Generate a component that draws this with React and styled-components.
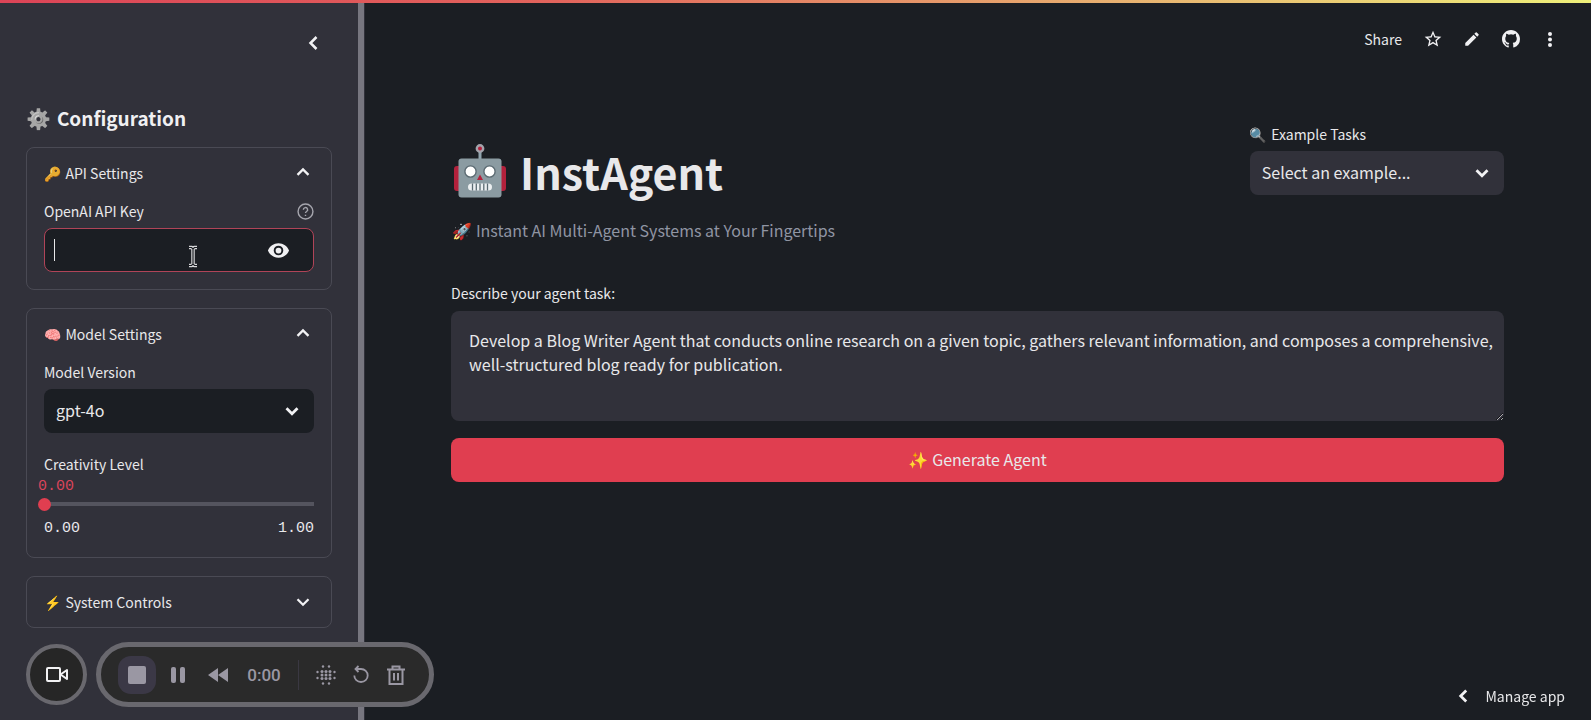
import React, { useState } from "react";
import styled, { createGlobalStyle } from "styled-components";

const GlobalStyle = createGlobalStyle`
  * { box-sizing: border-box; }
  body { margin: 0; background: #1b1e23; }
  body, button, input, select, textarea {
    font-family: "Noto Sans CJK SC", "Noto Sans", "Noto Color Emoji", sans-serif;
    color: #e8e8ea;
  }
  button { border: 0; padding: 0; background: none; cursor: pointer; }
`;

const Page = styled.div`
  display: flex;
  flex-direction: column;
  min-height: 100vh;
`;

const AccentBar = styled.div`
  height: 3px;
  flex: none;
  background: linear-gradient(90deg, #dc4457, #e2645c 35%, #e8b070 70%, #eef07a);
`;

const Shell = styled.div`
  display: flex;
  flex: 1;
`;

const Sidebar = styled.aside`
  display: flex;
  flex: none;
  width: 365px;
  background: #31313a;
`;

const SidebarBody = styled.div`
  flex: 1;
  padding: 24px 26px 90px;
`;

const ScrollThumb = styled.div`
  width: 6px;
  margin: 0 1px 7px 0;
  border-radius: 0 0 3px 3px;
  background: #77767f;
`;

const IconButton = styled.button`
  display: flex;
  flex: none;
  align-items: center;
  justify-content: center;
  width: ${(p) => p.$size || 32}px;
  height: ${(p) => p.$size || 32}px;
  color: ${(p) => p.$color || "#f0f0f2"};
`;

const SidebarTop = styled.div`
  display: flex;
  justify-content: flex-end;
  padding-right: 3px;
`;

const Emoji = styled.span`
  filter: ${(p) => p.$filter || "none"};
`;

const SidebarTitle = styled.h2`
  display: flex;
  align-items: center;
  gap: 6px;
  margin: 43px 0 13px;
  font-size: 19px;
  line-height: 32px;
  font-weight: 600;
  color: #f0f0f2;
  & > span { font-size: 20px; }
`;

const Card = styled.section`
  margin-bottom: 18px;
  padding: 0 17px ${(p) => p.$bottom || 0}px;
  border: 1px solid #4a4a54;
  border-radius: 8px;
`;

const CardHeader = styled.button`
  display: flex;
  align-items: center;
  justify-content: space-between;
  width: 100%;
  height: 50px;
  font-size: 14px;
  line-height: 24px;
`;

const WithEmoji = styled.span`
  display: inline-flex;
  align-items: center;
  gap: 4px;
`;

const LabelRow = styled.div`
  display: flex;
  align-items: center;
  justify-content: space-between;
  height: 26px;
  margin-bottom: 4px;
`;

const Label = styled.label`
  display: flex;
  align-items: center;
  gap: 4px;
  font-size: 14px;
  line-height: 24px;
`;

const KeyBox = styled.div`
  display: flex;
  align-items: center;
  position: relative;
  height: 44px;
  padding: 0 20px 0 9px;
  border: 1px solid #b04458;
  border-radius: 8px;
  background: #1b1e23;
`;

const Caret = styled.span`
  width: 1px;
  height: 22px;
  background: #e8e8ea;
`;

const KeyInput = styled.input`
  flex: 1;
  min-width: 0;
  border: 0;
  outline: 0;
  background: transparent;
  font-size: 16px;
`;

const Pointer = styled.svg`
  position: absolute;
  left: 142px;
  top: 16px;
`;

const SelectBox = styled.div`
  position: relative;
  & > svg {
    position: absolute;
    right: 11px;
    top: 11px;
    pointer-events: none;
  }
`;

const Select = styled.select`
  appearance: none;
  display: block;
  width: 100%;
  height: 44px;
  padding: 0 40px 2px 12px;
  border: 0;
  border-radius: 8px;
  background: ${(p) => p.$bg};
  font-size: 16px;
`;

const Slider = styled.div`
  display: flex;
  flex-direction: column;
  margin: 1px 0 0 -6px;
`;

const SliderValue = styled.output`
  font: 15px/20px "Liberation Mono", monospace;
  color: #d9455a;
`;

const Range = styled.input`
  appearance: none;
  width: 100%;
  height: 14px;
  margin: 0;
  background: linear-gradient(#54545e, #54545e) 6px 5px / 100% 4px no-repeat;
  border-radius: 2px;
  &::-webkit-slider-thumb {
    appearance: none;
    width: 13px;
    height: 13px;
    border-radius: 50%;
    background: #e03e50;
  }
`;

const Ticks = styled.div`
  display: flex;
  justify-content: space-between;
  margin-top: 8px;
  font: 15px/20px "Liberation Mono", monospace;
`;

const Spacer = styled.div`
  height: 19px;
`;

const Main = styled.main`
  flex: 1;
  min-width: 0;
`;

const TopBar = styled.header`
  display: flex;
  justify-content: flex-end;
  align-items: center;
  height: 72px;
  padding-right: 25px;
`;

const ShareButton = styled.button`
  margin-right: 11px;
  font-size: 14px;
  line-height: 24px;
`;

const Tool = styled(IconButton)`
  width: 39px;
  &:last-child { width: 32px; margin-left: 4px; }
`;

const Content = styled.div`
  padding: 46px 87px 40px 86px;
`;

const Columns = styled.div`
  display: grid;
  grid-template-columns: 3fr 1fr;
  gap: 36px;
`;

const Title = styled.h1`
  display: flex;
  align-items: center;
  gap: 12px;
  margin: 16px 0 0;
  padding-left: 1px;
  font-size: 43px;
  line-height: 68px;
  font-weight: 700;
`;

const Subtitle = styled.p`
  display: flex;
  align-items: center;
  gap: 4px;
  margin: 12px 0 37px;
  padding-left: 1px;
  font-size: 16px;
  line-height: 26px;
  color: #9095a3;
`;

const TaskText = styled.textarea`
  display: block;
  width: 100%;
  height: 110px;
  margin: 5px 0 17px;
  padding: 17px 10px 17px 18px;
  border: 0;
  outline: 0;
  border-radius: 8px;
  background: #31313a;
  font-size: 16px;
  line-height: 24px;
`;

const Generate = styled.button`
  display: flex;
  align-items: center;
  justify-content: center;
  gap: 4px;
  width: 100%;
  height: 44px;
  padding-bottom: 2px;
  border-radius: 8px;
  background: #e03e50;
  font-size: 16px;
`;

const Recorder = styled.div`
  position: fixed;
  left: 26px;
  bottom: 13px;
  display: flex;
  align-items: center;
  gap: 9px;
`;

const CameraButton = styled.button`
  display: flex;
  align-items: center;
  justify-content: center;
  width: 61px;
  height: 61px;
  border: 4px solid #69686e;
  border-radius: 50%;
  background: #262626;
`;

const Pill = styled.div`
  display: flex;
  align-items: center;
  width: 338px;
  height: 65px;
  padding-left: 17px;
  border: 5px solid #69686e;
  border-radius: 33px;
  background: #2a2a2a;
  color: #9a97a3;
`;

const StopButton = styled(IconButton)`
  margin-right: 1px;
  border-radius: 13px;
  background: #3b3846;
`;

const Time = styled.span`
  width: 48px;
  margin: 0 10px 0 3px;
  text-align: center;
  font: 500 17px/24px Roboto, sans-serif;
`;

const Divider = styled.span`
  width: 1px;
  height: 30px;
  margin-right: 9px;
  background: #3a3842;
`;

const ManageApp = styled.button`
  position: fixed;
  right: 26px;
  bottom: 12px;
  display: flex;
  align-items: center;
  gap: 12px;
  font-size: 14px;
  line-height: 24px;
`;

const chevrons = {
  left: "M15.500 6l-6 6 6 6",
  up: "M6 14l6-6 6 6",
  down: "M6 9l6 6 6-6",
};

const Chevron = ({ dir, size = 22, weight = 3 }) => (
  <svg width={size} height={size} viewBox="0 0 24 24" fill="none" stroke="#f2f2f4" strokeWidth={weight} aria-hidden="true">
    <path d={chevrons[dir]} />
  </svg>
);

const RobotIcon = () => (
  <svg width="56" height="56" viewBox="0 0 56 56" role="img" aria-label="Robot">
    <rect x="2" y="23" width="8" height="25" rx="3" fill="#b3213c" />
    <rect x="46" y="23" width="8" height="25" rx="3" fill="#b3213c" />
    <path d="M28 7v10" stroke="#90a4ae" strokeWidth="3" />
    <circle cx="28" cy="5.500" r="3.200" fill="#b3213c" stroke="#a3a3ab" strokeWidth="2.400" />
    <rect x="6.500" y="15.500" width="43" height="39" rx="3" fill="#8b9ba2" />
    <circle cx="18.500" cy="28.500" r="5.600" fill="#fff" stroke="#5b6a72" strokeWidth="1.400" />
    <circle cx="37.500" cy="28.500" r="5.600" fill="#fff" stroke="#5b6a72" strokeWidth="1.400" />
    <path d="M28 31.500l3 5.500h-6z" fill="#b3213c" />
    <rect x="16" y="40.500" width="24" height="7" rx="3.500" fill="#eceff1" />
    <path d="M20.500 40.500v7M24.300 40.500v7M28 40.500v7M31.800 40.500v7M35.500 40.500v7" stroke="#5b6a72" strokeWidth="1.300" />
  </svg>
);

const StarIcon = () => (
  <svg width="20" height="20" viewBox="0 0 24 24" fill="currentColor">
    <path d="M22 9.24l-7.19-.62L12 2 9.19 8.63 2 9.24l5.46 4.73L5.82 21 12 17.27 18.18 21l-1.63-7.03L22 9.24zM12 15.4l-3.76 2.27 1-4.28-3.32-2.88 4.38-.38L12 6.1l1.71 4.04 4.38.38-3.32 2.88 1 4.28L12 15.4z" />
  </svg>
);

const PencilIcon = () => (
  <svg width="18" height="18" viewBox="0 0 24 24" fill="currentColor">
    <path d="M3 17.25V21h3.75L17.81 9.94l-3.75-3.75L3 17.25zM20.71 7.04a1 1 0 0 0 0-1.41l-2.34-2.34a1 1 0 0 0-1.41 0l-1.83 1.83 3.75 3.75 1.83-1.83z" />
  </svg>
);

const GithubIcon = () => (
  <svg width="18" height="18" viewBox="0 0 16 16" fill="currentColor">
    <path d="M8 0C3.58 0 0 3.58 0 8c0 3.54 2.29 6.53 5.47 7.59.4.07.55-.17.55-.38 0-.19-.01-.82-.01-1.49-2.01.37-2.53-.49-2.69-.94-.09-.23-.48-.94-.82-1.13-.28-.15-.68-.52-.01-.53.63-.01 1.08.58 1.23.82.72 1.21 1.87.87 2.33.66.07-.52.28-.87.51-1.07-1.78-.2-3.64-.89-3.64-3.95 0-.87.31-1.59.82-2.15-.08-.2-.36-1.02.08-2.12 0 0 .67-.21 2.2.82a7.6 7.6 0 0 1 4 0c1.53-1.04 2.2-.82 2.2-.82.44 1.1.16 1.92.08 2.12.51.56.82 1.27.82 2.15 0 3.07-1.87 3.75-3.65 3.95.29.25.54.73.54 1.48 0 1.07-.01 1.93-.01 2.2 0 .21.15.46.55.38A8 8 0 0 0 16 8c0-4.42-3.58-8-8-8z" />
  </svg>
);

const DotsIcon = () => (
  <svg width="20" height="20" viewBox="0 0 20 20" fill="currentColor">
    <circle cx="10" cy="5" r="2" /><circle cx="10" cy="10.500" r="2" /><circle cx="10" cy="16" r="2" />
  </svg>
);

const EyeIcon = () => (
  <svg width="23" height="23" viewBox="0 0 24 24" fill="currentColor">
    <path d="M12 4.5C7 4.5 2.73 7.61 1 12c1.73 4.39 6 7.5 11 7.5s9.27-3.11 11-7.5c-1.73-4.39-6-7.5-11-7.5zM12 17a5 5 0 1 1 0-10 5 5 0 0 1 0 10zm0-8a3 3 0 1 0 0 6 3 3 0 0 0 0-6z" />
  </svg>
);

const HelpIcon = () => (
  <svg width="17" height="17" viewBox="0 0 24 24" fill="none" stroke="#a5a5ad" strokeWidth="2">
    <circle cx="12" cy="12" r="10.500" />
    <path d="M9 9.500a3 3 0 1 1 4.500 2.500c-1 .6-1.500 1-1.500 2.200M12 16.500v2" />
  </svg>
);

export default function App() {
  const [level, setLevel] = useState(0);
  return (
    <Page>
      <GlobalStyle />
      <AccentBar />
      <Shell>
        <Sidebar>
          <SidebarBody>
            <SidebarTop>
              <IconButton aria-label="Collapse sidebar"><Chevron dir="left" size={24} weight={2.5} /></IconButton>
            </SidebarTop>
            <SidebarTitle><Emoji $filter="grayscale(1)">⚙️</Emoji> Configuration</SidebarTitle>

            <Card $bottom={17}>
              <CardHeader aria-expanded="true">
                <WithEmoji><Emoji $filter="hue-rotate(-12deg) brightness(0.9)">🔑</Emoji> API Settings</WithEmoji>
                <Chevron dir="up" weight={2.5} />
              </CardHeader>
              <LabelRow>
                <Label htmlFor="key">OpenAI API Key</Label>
                <HelpIcon />
              </LabelRow>
              <KeyBox>
                <Caret />
                <KeyInput id="key" type="password" />
                <IconButton $size={30} aria-label="Show key"><EyeIcon /></IconButton>
                <Pointer width="12" height="23" viewBox="0 0 12 23" fill="none">
                  <path d="M2 2.500h2.500L6 4l1.500-1.500H10M6 4v15M2 20.500h2.500L6 19l1.500 1.500H10" stroke="#d8d8da" strokeWidth="3.500" />
                  <path d="M2 2.500h2.500L6 4l1.500-1.500H10M6 4v15M2 20.500h2.500L6 19l1.500 1.500H10" stroke="#1b1e23" strokeWidth="1.200" />
                </Pointer>
              </KeyBox>
            </Card>

            <Card $bottom={18}>
              <CardHeader aria-expanded="true">
                <WithEmoji><Emoji>🧠</Emoji> Model Settings</WithEmoji>
                <Chevron dir="up" weight={2.5} />
              </CardHeader>
              <LabelRow><Label htmlFor="model">Model Version</Label></LabelRow>
              <SelectBox>
                <Select id="model" $bg="#1b1e23"><option>gpt-4o</option></Select>
                <Chevron dir="down" />
              </SelectBox>
              <Spacer />
              <Label htmlFor="level">Creativity Level</Label>
              <Slider>
                <SliderValue htmlFor="level">{level.toFixed(2)}</SliderValue>
                <Range id="level" type="range" min="0" max="1" step="0.01" value={level} onChange={(e) => setLevel(Number(e.target.value))} />
              </Slider>
              <Ticks><span>0.00</span><span>1.00</span></Ticks>
            </Card>

            <Card>
              <CardHeader aria-expanded="false">
                <WithEmoji><Emoji>⚡</Emoji> System Controls</WithEmoji>
                <Chevron dir="down" weight={2.5} />
              </CardHeader>
            </Card>
          </SidebarBody>
          <ScrollThumb />
        </Sidebar>

        <Main>
          <TopBar>
            <ShareButton>Share</ShareButton>
            <Tool aria-label="Favorite"><StarIcon /></Tool>
            <Tool aria-label="Edit"><PencilIcon /></Tool>
            <Tool aria-label="GitHub"><GithubIcon /></Tool>
            <Tool aria-label="More"><DotsIcon /></Tool>
          </TopBar>
          <Content>
            <Columns>
              <div>
                <Title><RobotIcon /> InstAgent</Title>
                <Subtitle><Emoji>🚀</Emoji> Instant AI Multi-Agent Systems at Your Fingertips</Subtitle>
              </div>
              <div>
                <LabelRow><Label htmlFor="example"><Emoji>🔍</Emoji> Example Tasks</Label></LabelRow>
                <SelectBox>
                  <Select id="example" $bg="#31313a"><option>Select an example...</option></Select>
                  <Chevron dir="down" />
                </SelectBox>
              </div>
            </Columns>
            <LabelRow><Label htmlFor="task">Describe your agent task:</Label></LabelRow>
            <TaskText
              id="task"
              defaultValue="Develop a Blog Writer Agent that conducts online research on a given topic, gathers relevant information, and composes a comprehensive, well-structured blog ready for publication."
            />
            <Generate><Emoji>✨</Emoji> Generate Agent</Generate>
          </Content>
        </Main>
      </Shell>

      <Recorder>
        <CameraButton aria-label="Camera">
          <svg width="24" height="24" viewBox="0 0 24 24" fill="none" stroke="#f2f2f4" strokeWidth="2" strokeLinejoin="round">
            <rect x="2" y="5" width="13" height="13" rx="1" /><path d="M15.500 11.500L22 7v9z" />
          </svg>
        </CameraButton>
        <Pill>
          <StopButton $size={38} $color="#9a97a3" aria-label="Stop">
            <svg width="18" height="18"><rect width="18" height="18" rx="2" fill="currentColor" /></svg>
          </StopButton>
          <IconButton $size={42} $color="#9a97a3" aria-label="Pause">
            <svg width="14" height="16" fill="currentColor"><rect width="5" height="16" rx="2" /><rect x="9" width="5" height="16" rx="2" /></svg>
          </IconButton>
          <IconButton $size={38} $color="#9a97a3" aria-label="Rewind">
            <svg width="20" height="14" fill="currentColor"><path d="M10 0v14L0 7zM20 0v14L10 7z" /></svg>
          </IconButton>
          <Time>0:00</Time>
          <Divider />
          <IconButton $size={36} $color="#9a97a3" aria-label="Blur">
            <svg width="20" height="20" viewBox="0 0 20 20" fill="currentColor">
              {[6, 10, 14].flatMap((x) => [6.5, 10, 13.5].map((y) => <circle key={`${x}-${y}`} cx={x} cy={y} r="1.500" />))}
              {[[1.5, 7], [1.5, 13], [18.5, 7], [18.5, 13], [7, 1.5], [13, 1.5], [7, 18.5], [13, 18.5]].map(([x, y]) => <circle key={`o${x}-${y}`} cx={x} cy={y} r="1.200" />)}
            </svg>
          </IconButton>
          <IconButton $size={34} $color="#9a97a3" aria-label="Restart">
            <svg width="18" height="20" viewBox="0 0 18 20" fill="none" stroke="currentColor" strokeWidth="1.800">
              <path d="M2.300 10.500a6.700 6.500 0 1 0 6.700-6.500H3.500M6.500 1L3.500 4l3 3" />
            </svg>
          </IconButton>
          <IconButton $size={36} $color="#9a97a3" aria-label="Delete">
            <svg width="20" height="20" viewBox="0 0 20 20" fill="none" stroke="currentColor" strokeWidth="2">
              <path d="M1 4.500h18M6.500 4V1.500h7V4M3.500 5v14h13V5M8 8v7.500M12 8v7.500" />
            </svg>
          </IconButton>
        </Pill>
      </Recorder>

      <ManageApp><Chevron dir="left" size={22} weight={3} /> Manage app</ManageApp>
    </Page>
  );
}
